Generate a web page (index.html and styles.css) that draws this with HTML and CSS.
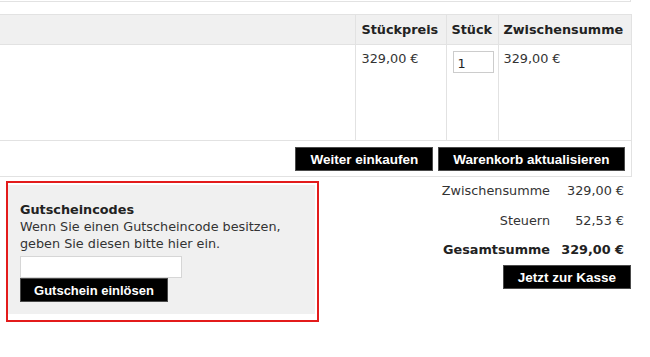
FILE: index.html
```html
<!DOCTYPE html>
<html lang="de">
<head>
  <meta charset="UTF-8">
  <title>Warenkorb</title>
  <link rel="stylesheet" href="styles.css">
</head>
<body>
  <div class="wrap">
    <div class="prev"></div>

    <table class="cart">
      <colgroup>
        <col class="c-prod">
        <col class="c-price">
        <col class="c-qty">
        <col class="c-sub">
      </colgroup>
      <thead>
        <tr>
          <th></th>
          <th class="price">Stückpreis</th>
          <th>Stück</th>
          <th>Zwischensumme</th>
        </tr>
      </thead>
      <tbody>
        <tr class="item">
          <td></td>
          <td class="price">329,00 €</td>
          <td><input class="qty" type="text" value="1"></td>
          <td>329,00 €</td>
        </tr>
        <tr class="actions">
          <td colspan="4">
            <div class="btn-row">
              <button class="btn">Weiter einkaufen</button>
              <button class="btn">Warenkorb aktualisieren</button>
            </div>
          </td>
        </tr>
      </tbody>
    </table>

    <div class="below">
      <div class="coupon">
        <div class="coupon-inner">
          <h3>Gutscheincodes</h3>
          <p>Wenn Sie einen Gutscheincode besitzen, geben Sie diesen bitte hier ein.</p>
          <input class="code" type="text">
          <button class="btn btn-small">Gutschein einlösen</button>
        </div>
      </div>

      <div class="totals">
        <div class="sum-row first">
          <span class="label">Zwischensumme</span>
          <span class="value">329,00 €</span>
        </div>
        <div class="sum-row">
          <span class="label">Steuern</span>
          <span class="value">52,53 €</span>
        </div>
        <div class="sum-row grand">
          <span class="label">Gesamtsumme</span>
          <span class="value">329,00 €</span>
        </div>
        <button class="btn checkout">Jetzt zur Kasse</button>
      </div>
    </div>
  </div>
</body>
</html>
```

FILE: styles.css
```css
body {
  margin: 0;
  font-family: "DejaVu Sans", Verdana, sans-serif;
  font-size: 12.8px;
  line-height: 17px;
  color: #333;
  background: #fff;
}
.wrap {
  width: 631px;
}
.prev {
  height: 1px;
  width: 630px;
  border-bottom: 1px solid #e2e2e2;
  border-right: 1px solid #e2e2e2;
}

/* cart table */
.cart {
  margin-top: 12px;
  width: 631px;
  border-collapse: collapse;
  table-layout: fixed;
}
.c-prod { width: 355px; }
.c-price { width: 91px; }
.c-qty { width: 52px; }
.c-sub { width: 133px; }
.cart th,
.cart td {
  border: 1px solid #e2e2e2;
  padding: 0 0 0 5px;
  text-align: left;
  vertical-align: top;
}
.cart th:first-child,
.cart td:first-child {
  border-left: none;
}
.cart thead tr {
  background: #f0f0f0;
  height: 30px;
}
.cart th {
  vertical-align: middle;
  font-weight: bold;
  color: #222;
}
.cart th.price,
.cart td.price {
  padding-left: 6px;
}
.item td {
  height: 96px;
  padding-top: 5px;
  box-sizing: border-box;
}
.qty {
  box-sizing: border-box;
  width: 41px;
  height: 22px;
  margin: 1px 0 0 1px;
  border: 1px solid #ccc;
  padding: 2px 4px 0;
  font-family: "DejaVu Sans", Verdana, sans-serif;
  font-size: 12.8px;
  color: #222;
}
.cart .actions td {
  padding: 6px 6px 5px 0;
}
.btn-row {
  display: flex;
  justify-content: flex-end;
  gap: 5px;
}

/* buttons */
.btn {
  height: 24px;
  padding: 0 14px;
  background: #000;
  color: #fff;
  border: 1px solid #4a4a4a;
  font-family: "Liberation Sans", Arial, sans-serif;
  font-weight: bold;
  font-size: 13.5px;
  cursor: pointer;
}

/* bottom area */
.below {
  display: flex;
  justify-content: space-between;
  align-items: flex-start;
  margin-top: 4px;
}
.coupon {
  margin-left: 6px;
  width: 307px;
  border: 2px solid #e31b1b;
  padding: 2px 2px 6px 0;
}
.coupon-inner {
  background: #f0f0f0;
  padding: 16px 12px 12px 12px;
}
.coupon h3 {
  margin: 0;
  font-size: 12.8px;
  line-height: 17px;
  color: #222;
}
.coupon p {
  margin: 0;
  width: 270px;
}
.code {
  display: block;
  box-sizing: border-box;
  width: 162px;
  height: 22px;
  margin: 4px 0 0;
  border: 1px solid #d6d6d6;
  background: #fff;
}
.btn-small {
  display: block;
  padding: 0 11px;
  font-size: 13px;
  width: 148px;
}
.totals {
  display: flex;
  flex-direction: column;
  align-items: flex-end;
  padding-top: 1px;
}
.sum-row {
  display: flex;
  margin-bottom: 12px;
  padding-right: 7px;
}
.sum-row.first {
  margin-bottom: 13px;
}
.sum-row .value {
  width: 74px;
  text-align: right;
}
.grand {
  font-weight: bold;
  color: #222;
  margin-bottom: 7px;
}
.checkout {
  padding: 0 14px;
}
```
